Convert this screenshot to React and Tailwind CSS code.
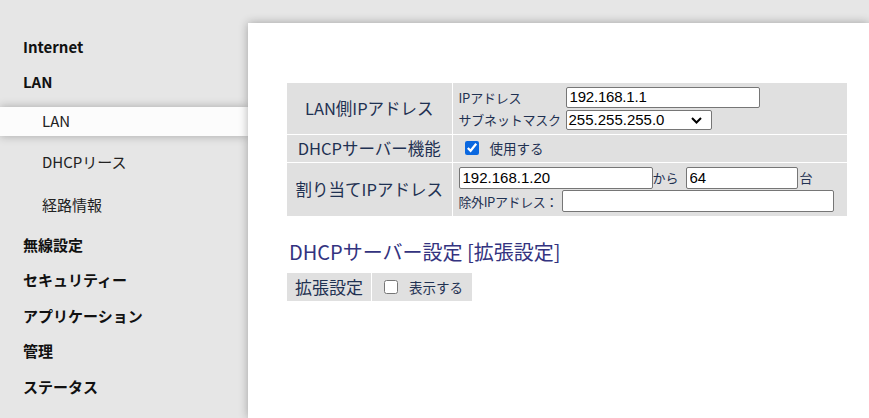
import { useState } from 'react';

const font = { fontFamily: '"Noto Sans CJK JP", "Noto Sans", sans-serif' };
const latin = { fontFamily: '"Liberation Sans", Arial, sans-serif' };

const Sidebar = () => (
  <div className="w-[248px] shrink-0 pt-[30px] text-[15px]">
    <div className="h-[35px] flex items-center pl-[23px] font-bold text-[#111]">Internet</div>
    <div className="h-[35px] flex items-center pl-[23px] font-bold text-[#111]">LAN</div>
    <div className="mt-[7px] h-[29px] flex items-center pl-[42px] text-[#222] bg-[#fcfcfc] shadow-[0_0_9px_rgba(0,0,0,0.28)] relative z-10">LAN</div>
    <div className="mt-[5px] h-[43px] flex items-center pl-[42px] text-[#222]">DHCPリース</div>
    <div className="h-[43px] flex items-center pl-[42px] text-[#222]">経路情報</div>
    {['無線設定', 'セキュリティー', 'アプリケーション', '管理', 'ステータス'].map((t) => (
      <div key={t} className="h-[35.6px] flex items-center pl-[23px] font-bold text-[#111]">{t}</div>
    ))}
  </div>
);

const Input = ({ value, className }) => (
  <input
    defaultValue={value}
    className={'border border-[#767676] rounded-[2px] bg-white px-[3px] text-[15px] text-black outline-none ' + className}
    style={latin}
  />
);

export default function App() {
  const [dhcp, setDhcp] = useState(true);
  const [show, setShow] = useState(false);
  return (
    <div className="w-[869px] h-[418px] bg-[#e6e6e6] flex overflow-hidden" style={font}>
      <Sidebar />
      <div className="flex-1 mt-[23px] bg-white shadow-[0_0_9px_rgba(0,0,0,0.3)] pl-[39px] pt-[60px] relative z-20">
        <table className="border-collapse w-[560px] text-[#1f3152]">
          <tbody>
            <tr className="border-b border-white">
              <td className="w-[165px] h-[51px] bg-[#e0e0e0] text-center text-[16.5px] border-r border-white">LAN側IPアドレス</td>
              <td className="bg-[#e0e0e0] pl-[6px] text-[13px] tracking-[-0.2px]">
                <div className="flex items-center h-[23px]">
                  <span className="w-[107px]">IPアドレス</span>
                  <Input value="192.168.1.1" className="w-[194px] h-[21px]" />
                </div>
                <div className="flex items-center h-[22px]">
                  <span className="w-[107px] whitespace-nowrap">サブネットマスク</span>
                  <div className="relative w-[146px] h-[20px] border border-[#767676] rounded-[2px] bg-white flex items-center pl-[2px] text-[15px] text-black tracking-normal" style={latin}>
                    255.255.255.0
                    <svg className="absolute right-[9px] top-[6px]" width="11" height="7" viewBox="0 0 11 7">
                      <path d="M1 1l4.5 4.5L10 1" fill="none" stroke="#000" strokeWidth="2" />
                    </svg>
                  </div>
                </div>
              </td>
            </tr>
            <tr className="border-b border-white">
              <td className="h-[28px] bg-[#e0e0e0] text-center text-[16.5px] border-r border-white">DHCPサーバー機能</td>
              <td className="bg-[#e0e0e0] pl-[12px] text-[13.5px]">
                <label className="flex items-center gap-[11px]">
                  <input type="checkbox" checked={dhcp} onChange={() => setDhcp(!dhcp)} className="w-[14px] h-[14px] accent-[#0b68e0]" />
                  <span>使用する</span>
                </label>
              </td>
            </tr>
            <tr>
              <td className="h-[54px] bg-[#e0e0e0] text-center text-[16.5px] border-r border-white">割り当てIPアドレス</td>
              <td className="bg-[#e0e0e0] pl-[6px] text-[13px]">
                <div className="flex items-center h-[24px] pt-[1px]">
                  <Input value="192.168.1.20" className="w-[194px] h-[22px]" />
                  <span className="w-[33px]">から</span>
                  <Input value="64" className="w-[112px] h-[22px]" />
                  <span className="ml-[2px]">台</span>
                </div>
                <div className="flex items-center h-[24px]">
                  <span className="w-[103px] whitespace-nowrap tracking-[-0.4px]">除外IPアドレス：</span>
                  <Input value="" className="w-[272px] h-[22px]" />
                </div>
              </td>
            </tr>
          </tbody>
        </table>
        <div className="mt-[21px] ml-[2px] h-[30px] leading-[30px] text-[20px] text-[#333380]">DHCPサーバー設定 [拡張設定]</div>
        <div className="mt-[6px] flex text-[#1f3152] gap-[1px]">
          <div className="h-[28px] w-[84px] bg-[#e0e0e0] flex items-center justify-center text-[17px]">拡張設定</div>
          <label className="h-[28px] w-[100px] bg-[#e0e0e0] flex items-center pl-[12px] gap-[11px] text-[13.5px]">
            <input type="checkbox" checked={show} onChange={() => setShow(!show)} className="w-[14px] h-[14px]" />
            <span>表示する</span>
          </label>
        </div>
      </div>
    </div>
  );
}
